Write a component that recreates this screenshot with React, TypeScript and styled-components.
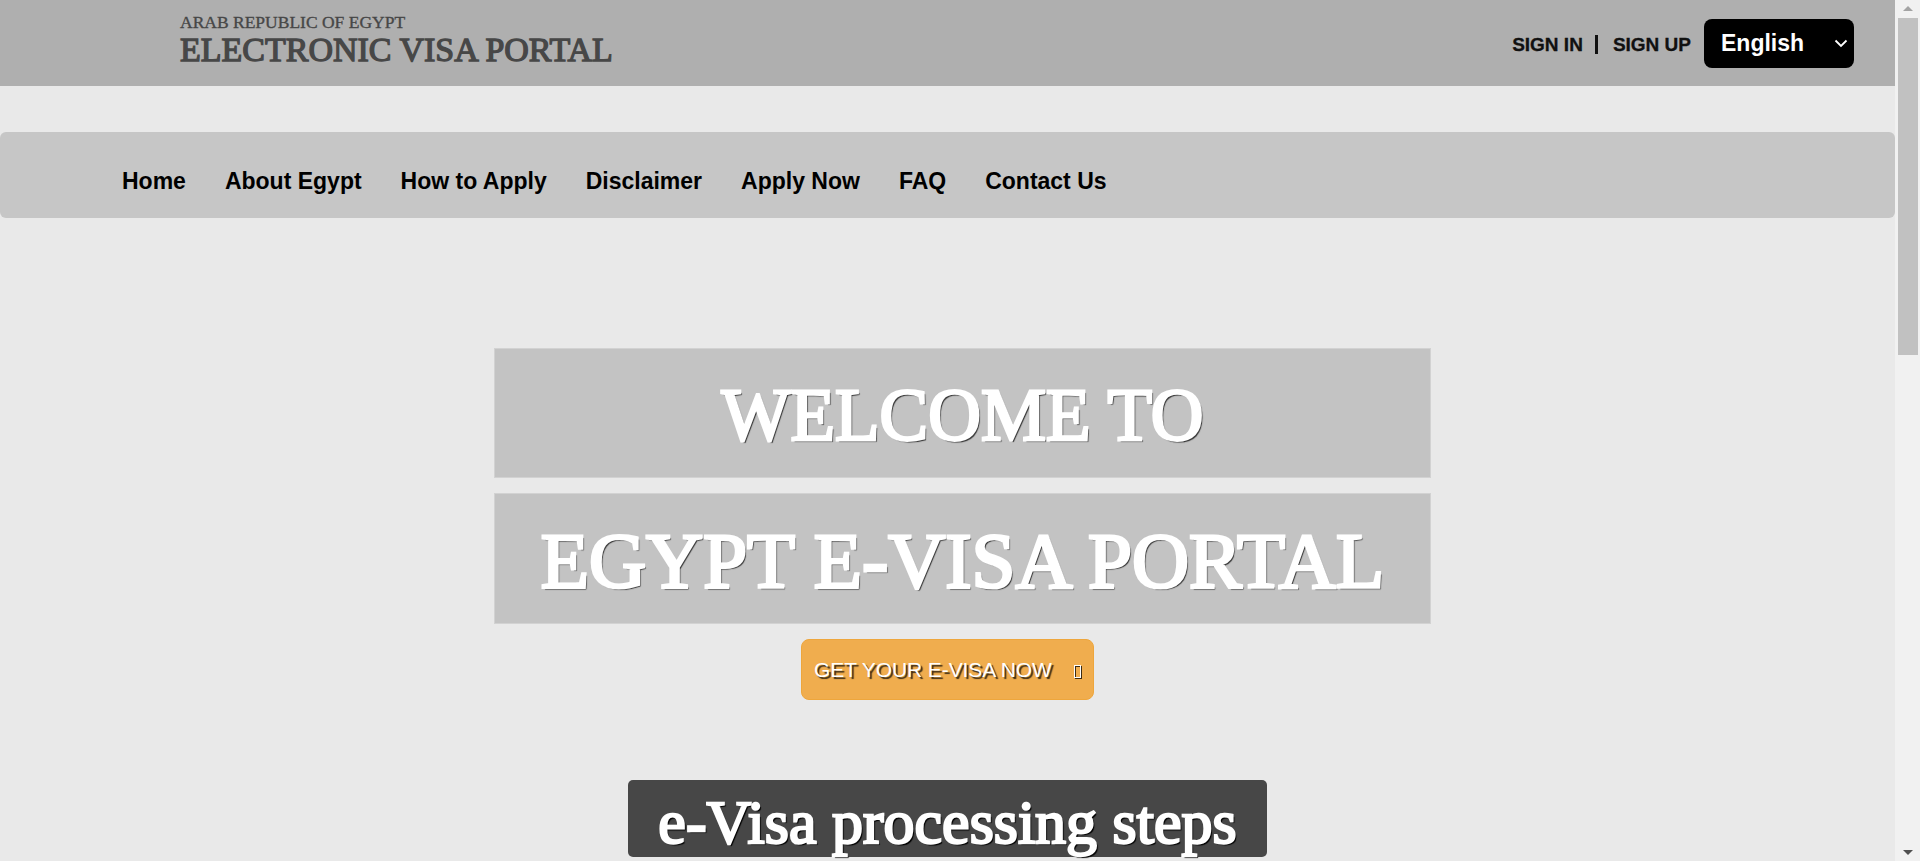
import React from "react";
import styled, { createGlobalStyle } from "styled-components";

const GlobalStyle = createGlobalStyle`
  html, body { margin: 0; padding: 0; height: 100%; overflow: hidden; }
  body {
    background: #e9e9e9;
    font-family: "Liberation Sans", Arial, sans-serif;
  }
`;

const Viewport = styled.div`
  height: 100vh;
  display: flex;
`;

const Content = styled.div`
  flex: 1;
  min-width: 0;
  overflow-y: auto;
  overflow-x: hidden;
  scrollbar-width: none;
  display: flex;
  flex-direction: column;
`;

/* ---------- window scrollbar ---------- */
const ScrollRail = styled.div`
  flex: none;
  width: 25px;
  background: #f1f1f1;
  display: flex;
  flex-direction: column;
`;

const RailButton = styled.div`
  height: 17px;
  display: flex;
  align-items: center;
  justify-content: center;
  padding-left: 1px;
`;

const RailThumb = styled.div`
  height: 337px;
  margin: 1px 2px 0 3px;
  background: #c1c1c1;
`;

const RailSpacer = styled.div`
  flex: 1;
`;

/* ---------- top header ---------- */
const TopBar = styled.header`
  flex: none;
  height: 86px;
  background: #afafaf;
  display: flex;
  align-items: center;
  justify-content: space-between;
  padding: 0 41px 0 180px;
  box-sizing: border-box;
`;

const Brand = styled.div`
  align-self: flex-start;
  padding-top: 14px;
  display: flex;
  flex-direction: column;
  gap: 2px;
  color: #474747;
  font-family: "Liberation Serif", "Times New Roman", serif;
`;

const BrandSub = styled.span`
  font-size: 17.5px;
  line-height: 17px;
  -webkit-text-stroke: 0.35px #474747;
`;

const BrandTitle = styled.span`
  font-size: 34px;
  line-height: 33px;
  -webkit-text-stroke: 1.3px #474747;
`;

const Account = styled.div`
  display: flex;
  align-items: center;
`;

const AuthLink = styled.a`
  font-size: 19px;
  font-weight: 700;
  color: #111;
  text-decoration: none;
  padding-top: 3px;
  -webkit-text-stroke: 0.3px #111;
`;

const Divider = styled.span`
  display: inline-block;
  width: 3px;
  height: 19px;
  background: #111;
  margin: 3px 15px 0 12px;
`;

const LangSelect = styled.div`
  margin-left: 13px;
  width: 150px;
  height: 49px;
  box-sizing: border-box;
  background: #000;
  border-radius: 8px;
  display: flex;
  align-items: center;
  justify-content: space-between;
  padding: 0 6px 0 17px;
  color: #fff;
  font-size: 23px;
  font-weight: 700;
`;

/* ---------- nav ---------- */
const NavBar = styled.nav`
  flex: none;
  margin-top: 46px;
  height: 86px;
  box-sizing: border-box;
  background: #c6c6c6;
  border-radius: 6px;
  display: flex;
  align-items: flex-start;
  gap: 39px;
  padding: 36px 0 0 122px;
`;

const NavLink = styled.a`
  font-size: 23px;
  line-height: 26px;
  font-weight: 700;
  color: #000;
  text-decoration: none;
  white-space: nowrap;
`;

/* ---------- hero ---------- */
const Main = styled.main`
  flex: none;
  display: flex;
  flex-direction: column;
  align-items: center;
  padding: 130px 0 120px;
`;

const HeroStack = styled.div`
  display: flex;
  flex-direction: column;
  gap: 15px;
  padding-left: 30px;
`;

const HeroBox = styled.div<{ $h: number }>`
  width: 937px;
  height: ${(p) => p.$h}px;
  box-sizing: border-box;
  background: #c3c3c3;
  border: 1px solid #d2d2d2;
  display: flex;
  align-items: center;
  justify-content: center;
`;

const HeroTitle = styled.h1<{ $size: number; $stroke: number }>`
  margin: 0;
  font-family: "Liberation Serif", "Times New Roman", serif;
  font-weight: 400;
  font-size: ${(p) => p.$size}px;
  line-height: 1;
  padding-top: 4px;
  color: #fff;
  -webkit-text-stroke: ${(p) => p.$stroke}px #fff;
  text-shadow: 2px 2px 1px rgba(0, 0, 0, 0.75);
  white-space: nowrap;
`;

const CtaButton = styled.a`
  margin-top: 15px;
  height: 61px;
  width: 293px;
  box-sizing: border-box;
  display: inline-flex;
  align-items: center;
  padding: 0 12px;
  background: #f0ad4e;
  border: 1px solid #eea63c;
  border-radius: 8px;
  color: #fff;
  font-size: 21px;
  letter-spacing: -0.1px;
  text-decoration: none;
  text-shadow: 2px 2px 1px rgba(0, 0, 0, 0.75);
  white-space: nowrap;
`;

const MissingGlyph = styled.span`
  display: inline-block;
  width: 10px;
  height: 13px;
  box-sizing: border-box;
  border: 1.5px solid #fff;
  margin-left: 22px;
  margin-top: 3px;
  filter: drop-shadow(1.5px 1.5px 0.5px rgba(0, 0, 0, 0.75));
`;

const StepsHeading = styled.h2`
  margin: 80px 0 0 0;
  width: 639px;
  height: 77px;
  box-sizing: border-box;
  background: #474747;
  border-radius: 5px;
  display: flex;
  align-items: center;
  justify-content: center;
  padding-top: 6px;
  font-family: "Liberation Serif", "Times New Roman", serif;
  font-weight: 400;
  font-size: 62px;
  line-height: 1;
  color: #fff;
  -webkit-text-stroke: 2.4px #fff;
  text-shadow: 2px 2px 1px #000;
  white-space: nowrap;
`;

const navItems = [
  "Home",
  "About Egypt",
  "How to Apply",
  "Disclaimer",
  "Apply Now",
  "FAQ",
  "Contact Us",
];

export default function App() {
  return (
    <Viewport>
      <GlobalStyle />
      <Content>
        <TopBar>
          <Brand>
            <BrandSub>ARAB REPUBLIC OF EGYPT</BrandSub>
            <BrandTitle>ELECTRONIC VISA PORTAL</BrandTitle>
          </Brand>
          <Account>
            <AuthLink href="#">SIGN IN</AuthLink>
            <Divider />
            <AuthLink href="#">SIGN UP</AuthLink>
            <LangSelect>
              <span>English</span>
              <svg width="14" height="9" viewBox="0 0 14 9" fill="none">
                <path d="M1.5 1.5 L7 7 L12.5 1.5" stroke="#fff" strokeWidth="1.8" />
              </svg>
            </LangSelect>
          </Account>
        </TopBar>

        <NavBar>
          {navItems.map((n) => (
            <NavLink key={n} href="#">
              {n}
            </NavLink>
          ))}
        </NavBar>

        <Main>
          <HeroStack>
            <HeroBox $h={130}>
              <HeroTitle $size={73} $stroke={2.8}>
                WELCOME TO
              </HeroTitle>
            </HeroBox>
            <HeroBox $h={131}>
              <HeroTitle $size={79} $stroke={3}>
                EGYPT E-VISA PORTAL
              </HeroTitle>
            </HeroBox>
          </HeroStack>
          <CtaButton href="#">
            GET YOUR E-VISA NOW
            <MissingGlyph />
          </CtaButton>

          <StepsHeading>e-Visa processing steps</StepsHeading>
        </Main>
      </Content>

      <ScrollRail aria-hidden="true">
        <RailButton>
          <svg width="10" height="5" viewBox="0 0 10 5">
            <polygon points="0,5 5,0 10,5" fill="#a3a3a3" />
          </svg>
        </RailButton>
        <RailThumb />
        <RailSpacer />
        <RailButton>
          <svg width="10" height="5" viewBox="0 0 10 5">
            <polygon points="0,0 10,0 5,5" fill="#505050" />
          </svg>
        </RailButton>
      </ScrollRail>
    </Viewport>
  );
}
